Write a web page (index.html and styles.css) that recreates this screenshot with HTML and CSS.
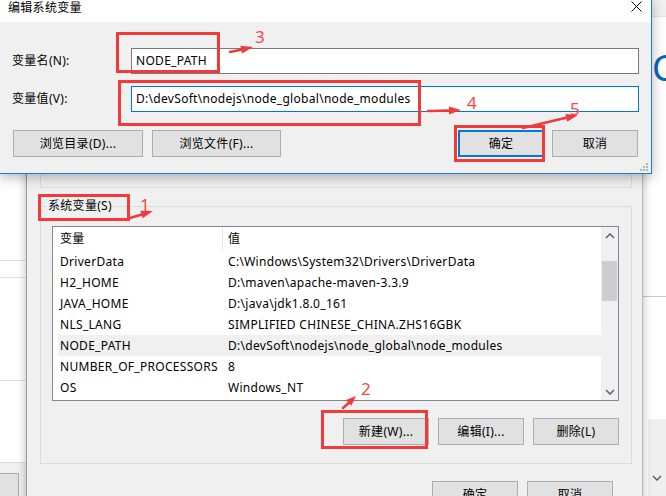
FILE: index.html
```html
<!DOCTYPE html>
<html lang="zh-CN">
<head>
<meta charset="utf-8">
<title>编辑系统变量</title>
<link rel="stylesheet" href="styles.css">
</head>
<body>
<div class="desk">

  <div class="back-left">
    <div class="bl-a"></div>
    <div class="bl-b"></div>
    <div class="bl-c"></div>
    <div class="bl-d"></div>
    <div class="bl-foot"><div class="bl-btn"></div></div>
  </div>

  <div class="back-right">
    <div class="br-band"></div>
    <div class="br-head">C</div>
    <div class="br-mid"></div>
    <div class="br-low"></div>
    <div class="br-foot">
      <svg class="chev" width="10" height="6" viewBox="0 0 10 6"><path d="M1 1 L5 5 L9 1" fill="none" stroke="#606060" stroke-width="1.5"/></svg>
    </div>
  </div>

  <div class="envwin">
    <div class="usergrp"></div>
    <fieldset class="sysgrp">
      <legend>系统变量(S)</legend>
      <div class="list">
        <div class="list-body">
          <div class="list-head">
            <div class="hcell hcell-name">变量</div>
            <div class="hcell hcell-val">值</div>
          </div>
          <div class="row"><span>DriverData</span><span>C:\Windows\System32\Drivers\DriverData</span></div>
          <div class="row"><span>H2_HOME</span><span>D:\maven\apache-maven-3.3.9</span></div>
          <div class="row"><span>JAVA_HOME</span><span>D:\java\jdk1.8.0_161</span></div>
          <div class="row"><span>NLS_LANG</span><span>SIMPLIFIED CHINESE_CHINA.ZHS16GBK</span></div>
          <div class="row row-sel"><span>NODE_PATH</span><span>D:\devSoft\nodejs\node_global\node_modules</span></div>
          <div class="row"><span>NUMBER_OF_PROCESSORS</span><span>8</span></div>
          <div class="row"><span>OS</span><span>Windows_NT</span></div>
        </div>
        <div class="vscroll">
          <div class="sb-btn"><svg width="10" height="6" viewBox="0 0 10 6"><path d="M1 5 L5 1 L9 5" fill="none" stroke="#606060" stroke-width="1.5"/></svg></div>
          <div class="sb-track"><div class="sb-thumb"></div></div>
          <div class="sb-btn"><svg width="10" height="6" viewBox="0 0 10 6"><path d="M1 1 L5 5 L9 1" fill="none" stroke="#606060" stroke-width="1.5"/></svg></div>
        </div>
      </div>
      <div class="grp-actions">
        <button class="btn">新建(W)...</button>
        <button class="btn">编辑(I)...</button>
        <button class="btn">删除(L)</button>
      </div>
    </fieldset>
    <div class="env-actions">
      <button class="btn">确定</button>
      <button class="btn">取消</button>
    </div>
  </div>

  <div class="editwin">
    <div class="titlebar">
      <span class="title">编辑系统变量</span>
      <svg class="close" width="11" height="11" viewBox="0 0 11 11"><path d="M0.5 0.5 L10.5 10.5 M10.5 0.5 L0.5 10.5" stroke="#000" stroke-width="1"/></svg>
    </div>
    <div class="editbody">
      <div class="form">
        <label class="lbl">变量名(N):</label>
        <div class="field">NODE_PATH</div>
        <label class="lbl">变量值(V):</label>
        <div class="field field-focus">D:\devSoft\nodejs\node_global\node_modules</div>
      </div>
      <div class="edit-actions">
        <button class="btn btn-wide">浏览目录(D)...</button>
        <button class="btn btn-wide2">浏览文件(F)...</button>
        <span class="spacer"></span>
        <button class="btn btn-default">确定</button>
        <button class="btn">取消</button>
      </div>
    </div>
    <svg class="grip" width="9" height="9" viewBox="0 0 9 9">
      <g fill="#b4b4b4">
        <rect x="6" y="0" width="2" height="2"/>
        <rect x="3" y="3" width="2" height="2"/><rect x="6" y="3" width="2" height="2"/>
        <rect x="0" y="6" width="2" height="2"/><rect x="3" y="6" width="2" height="2"/><rect x="6" y="6" width="2" height="2"/>
      </g>
    </svg>
  </div>

  <svg class="notes" width="666" height="496" viewBox="0 0 666 496">
    <g fill="none" stroke="#f23a3a" stroke-width="3">
      <rect x="117.5" y="33.5" width="101" height="38"/>
      <rect x="119.5" y="81.5" width="300" height="43"/>
      <rect x="455.5" y="126.5" width="88" height="34"/>
      <rect x="39.5" y="195.5" width="89" height="24"/>
      <rect x="322.5" y="411.5" width="104" height="36"/>
    </g>
    <g stroke="#f23a3a" stroke-width="2.5" stroke-linecap="round">
      <line x1="230" y1="52" x2="242" y2="49.6"/>
      <line x1="428" y1="111" x2="449" y2="110.4"/>
      <line x1="523" y1="128" x2="566" y2="117.8"/>
      <line x1="130" y1="218" x2="142" y2="214.5"/>
      <line x1="343" y1="408" x2="349" y2="402.8"/>
    </g>
    <g fill="#f23a3a">
      <polygon points="253,47 242.1,53.5 240.4,45.7"/>
      <polygon points="461,110 449,114.4 449,106.4"/>
      <polygon points="578,115 567.2,121.7 565.4,113.9"/>
      <polygon points="153,211 142.7,218.3 140.3,210.7"/>
      <polygon points="356,396 351.4,405.7 346,399.9"/>
    </g>
    <g class="num" fill="#f44848">
      <text x="255" y="43">3</text>
      <text x="467" y="109">4</text>
      <text x="570" y="115">5</text>
      <text x="140" y="211">1</text>
      <text x="361" y="395">2</text>
    </g>
  </svg>
</div>
</body>
</html>
```

FILE: styles.css
```css
* { box-sizing: border-box; }
html, body { margin: 0; padding: 0; }
body {
  width: 666px;
  height: 496px;
  overflow: hidden;
  background: #fff;
  font-family: "Noto Sans", "Noto Sans CJK SC", sans-serif;
  font-size: 12px;
  letter-spacing: 0.3px;
  color: #000;
}
.desk {
  position: relative;
  width: 666px;
  height: 496px;
  overflow: hidden;
  background: #fff;
}

/* background windows (desktop canvas) */
.back-left {
  position: absolute;
  left: 0;
  top: 0;
  width: 30px;
  height: 496px;
  display: flex;
  flex-direction: column;
  background: #fff;
}
.bl-a { height: 261px; border-bottom: 1px solid #dedede; flex: none; }
.bl-b { height: 17px; border-bottom: 1px solid #dedede; flex: none; }
.bl-c { height: 103px; border-bottom: 1px solid #dedede; flex: none; }
.bl-d { height: 82px; border-bottom: 1px solid #dcdcdc; flex: none; }
.bl-foot { flex: 1; background: #f0f0f0; padding-top: 10px; }
.bl-btn { width: 19px; height: 30px; background: #e1e1e1; border: 1px solid #adadad; border-left: none; }

.back-right {
  position: absolute;
  left: 640px;
  top: 0;
  width: 26px;
  height: 496px;
  display: flex;
  flex-direction: column;
  background: #fff;
}
.br-band { height: 17px; background: #f0f0f0; border-bottom: 1px solid #e4e4e4; flex: none; }
.br-head {
  height: 100px;
  padding-left: 12px;
  padding-top: 31px;
  font-size: 36px;
  line-height: 40px;
  letter-spacing: 0;
  color: #0a66b4;
  flex: none;
}
.br-mid { height: 180px; border-bottom: 1px solid #c8c8c8; flex: none; }
.br-low { height: 122px; flex: none; }
.br-foot {
  flex: 1;
  background: #efefef;
  margin-left: 8px;
  display: flex;
  justify-content: center;
  align-items: flex-end;
  padding-bottom: 15px;
}

/* environment variables window */
.envwin {
  position: absolute;
  left: 26px;
  top: 0;
  width: 617px;
  height: 520px;
  background: #f0f0f0;
  border-left: 1px solid #9a9a9a;
  border-right: 1px solid #b8b8b8;
  box-shadow: 0 0 9px rgba(0, 0, 0, 0.28);
  padding-left: 13px;
}
.usergrp {
  width: 592px;
  height: 188px;
  border: 1px solid #dcdcdc;
  border-top: none;
}
.sysgrp {
  width: 592px;
  margin: 10px 0 0 0;
  border: 1px solid #dcdcdc;
  padding: 12px 12px 18px 11px;
  min-width: 0;
}
.sysgrp legend {
  margin-left: -5px;
  padding: 0 1px;
  line-height: 16px;
  font-size: 12px;
}
.list {
  width: 567px;
  height: 175px;
  border: 1px solid #828790;
  background: #fff;
  display: flex;
}
.list-body { flex: 1; }
.list-head {
  height: 24px;
  margin-left: 5px;
  display: flex;
  align-items: stretch;
}
.hcell { line-height: 23px; }
.hcell-name { width: 165px; padding-left: 2px; border-right: 1px solid #e5e5e5; }
.hcell-val { padding-left: 5px; }
.row {
  height: 21px;
  margin-left: 5px;
  display: grid;
  grid-template-columns: 168px 1fr;
  padding-top: 1px;
  line-height: 20px;
  white-space: nowrap;
}
.row span { padding-left: 2px; }
.row-sel { background: #f0f0f0; }
.vscroll {
  width: 17px;
  background: #f0f0f0;
  display: flex;
  flex-direction: column;
}
.sb-btn {
  height: 17px;
  display: flex;
  align-items: center;
  justify-content: center;
  flex: none;
}
.sb-track { flex: 1; padding: 17px 1px 0 1px; }
.sb-thumb { height: 40px; background: #cdcdcd; }

.grp-actions {
  margin-top: 17px;
  display: flex;
  justify-content: flex-end;
  gap: 9px;
}
.btn {
  width: 86px;
  height: 27px;
  background: #e1e1e1;
  border: 1px solid #adadad;
  font-family: "Noto Sans", "Noto Sans CJK SC", sans-serif;
  font-size: 12px;
  letter-spacing: 0.3px;
  color: #000;
  padding: 0;
  line-height: 25px;
  margin: 0;
}
.env-actions {
  width: 592px;
  margin-top: 17px;
  padding-right: 19px;
  display: flex;
  justify-content: flex-end;
  gap: 9px;
}

/* edit system variable dialog */
.editwin {
  position: absolute;
  left: -1px;
  top: -1px;
  width: 653px;
  height: 175px;
  border: 1px solid #1a7fd4;
  background: #f0f0f0;
  box-shadow: 0 3px 12px rgba(0, 0, 0, 0.3);
}
.titlebar {
  height: 22px;
  background: #fff;
  display: flex;
  justify-content: space-between;
  align-items: flex-start;
  padding-left: 8px;
  padding-right: 9px;
}
.title { line-height: 15px; font-size: 12px; }
.close { margin-top: 1px; }
.editbody {
  padding: 26px 12px 16px 12px;
}
.form {
  display: grid;
  grid-template-columns: 119px 1fr;
  row-gap: 12px;
  align-items: center;
}
.lbl { line-height: 16px; }
.field {
  height: 26px;
  border: 1px solid #7a7a7a;
  background: #fff;
  padding-left: 4px;
  line-height: 24px;
  white-space: nowrap;
}
.field-focus { border-color: #0078d7; }
.edit-actions {
  margin-top: 18px;
  display: flex;
  padding: 0 1px;
}
.btn-wide { width: 130px; margin-right: 9px; }
.btn-wide2 { width: 129px; }
.spacer { flex: 1; }
.btn-default { border: 2px solid #0078d7; margin-right: 8px; line-height: 23px; }
.grip { position: absolute; right: 2px; bottom: 1px; }

/* annotation overlay */
.notes {
  position: absolute;
  left: 0;
  top: 0;
  pointer-events: none;
}
.num text {
  font-family: "Noto Sans", sans-serif;
  font-size: 17px;
  letter-spacing: 0;
}
```
